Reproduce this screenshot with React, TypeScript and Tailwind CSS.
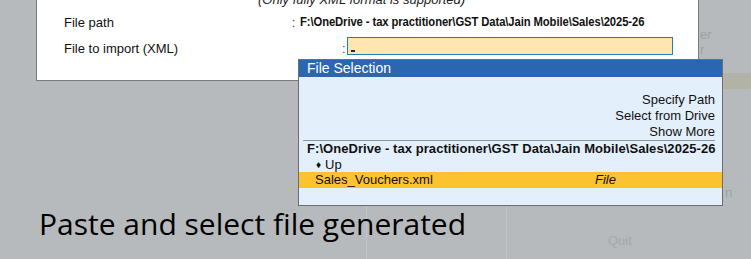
import React from "react";

const PATH = "F:\\OneDrive - tax practitioner\\GST Data\\Jain Mobile\\Sales\\2025-26";

export default function App() {
  const font = { fontFamily: '"Liberation Sans", Arial, sans-serif' } as React.CSSProperties;
  return (
    <div className="relative w-[751px] h-[259px] overflow-hidden bg-[#b6babd]" style={font}>
      {/* background columns */}
      <div className="absolute inset-0 flex">
        <div className="w-[366px] h-full"></div>
        <div className="w-[140px] h-full border-l border-[#c1c5c8]"></div>
        <div className="flex-1 h-full border-l border-[#c1c5c8] flex flex-col text-[13px] text-[#9ba1a6]">
          <div className="h-[27px]"></div>
          <div className="h-[15px] leading-[15px] pl-[193px]">er</div>
          <div className="h-[15px] leading-[15px] pl-[193px]">r</div>
          <div className="h-[16px]"></div>
          <div className="h-[16px] bg-[#b2b3a6]"></div>
          <div className="h-[96px]"></div>
          <div className="h-[16px] leading-[16px] pl-[218px]">n</div>
          <div className="h-[32px]"></div>
          <div className="h-[16px] leading-[16px] pl-[101px] text-[#a3a8ad]">Quit</div>
        </div>
      </div>

      {/* main form window */}
      <div className="relative ml-[36px] mt-[-9px] w-[663px] h-[90px] bg-white border border-[#7b7b7b] text-[13px] leading-[16px] text-[#111]">
        <div className="h-[16px] pl-[221px] italic text-[#222]">(Only fully XML format is supported)</div>
        <div className="flex h-[26px] items-start">
          <div className="w-[305px] pl-[27px] mt-[7px]">File path</div>
          <div className="w-[10px] mt-[7px] text-[#444]">:</div>
          <div className="whitespace-nowrap mt-[6px]">
            <span className="inline-block origin-left scale-x-[0.865] font-bold text-[13px] tracking-[-0.1px]">{PATH}</span>
          </div>
        </div>
        <div className="flex h-[26px] items-start">
          <div className="w-[305px] pl-[27px] mt-[7px]">File to import (XML)</div>
          <div className="w-[5px] mt-[7px] text-[#444]">:</div>
          <div className="w-[326px] h-[18px] mt-[3px] bg-[#fde6b2] border border-[#1a80c4] flex items-end pl-[3px] pb-[2px]">
            <div className="w-[4px] h-[2px] bg-[#1b2a52]"></div>
          </div>
        </div>
      </div>

      {/* File Selection popup */}
      <div className="absolute left-[298px] top-[59px] w-[425px] h-[147px] bg-[#e3effa] border border-[#6e6e6e] text-[13px] text-[#111] flex flex-col">
        <div className="h-[17px] leading-[17px] bg-[#2b67b0] text-white pl-[8px] text-[14px]">File Selection</div>
        <div className="h-[15px]"></div>
        <div className="h-[16px] leading-[16px] text-right pr-[7px]">Specify Path</div>
        <div className="h-[16px] leading-[16px] text-right pr-[7px]">Select from Drive</div>
        <div className="h-[16px] leading-[16px] text-right pr-[7px]">Show More</div>
        <div className="ml-[4px] mr-[7px] h-[1px] bg-[#8e9397]"></div>
        <div className="h-[16px] leading-[16px] pl-[8px] font-bold whitespace-nowrap tracking-[0.06px]">{PATH}</div>
        <div className="h-[15px] leading-[15px] pl-[17px] flex items-center gap-[4px]">
          <span className="text-[10px]">♦</span>
          <span>Up</span>
        </div>
        <div className="h-[16px] leading-[16px] bg-[#fdc22f] flex">
          <div className="w-[296px] pl-[16px]">Sales_Vouchers.xml</div>
          <div className="italic">File</div>
        </div>
      </div>

      {/* annotation */}
      <div
        className="absolute left-[39px] top-[204px] text-[30px] leading-[40px] text-black whitespace-nowrap"
        style={{ fontFamily: '"Open Sans", "Noto Sans", sans-serif' }}
      >
        Paste and select file generated
      </div>
    </div>
  );
}
